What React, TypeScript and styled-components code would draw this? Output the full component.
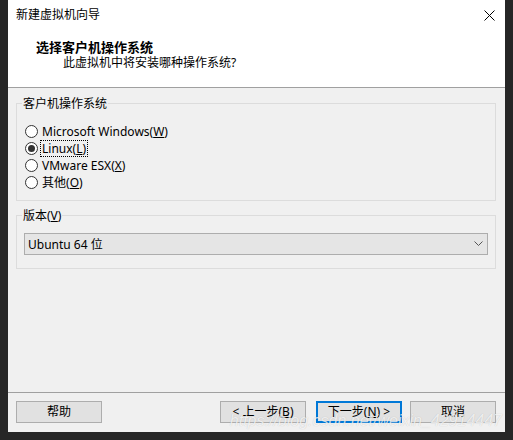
import styled, { createGlobalStyle } from 'styled-components';

const GlobalStyle = createGlobalStyle`
  html, body {
    margin: 0;
    padding: 0;
    background: #262626;
  }
  body {
    font-family: "Noto Sans", "Noto Sans CJK SC", sans-serif;
    font-size: 12px;
    color: #000;
  }
`;

const Window = styled.div`
  position: relative;
  margin-left: 8px;
  width: 497px;
  height: 432px;
  background: #f0f0f0;
  display: flex;
  flex-direction: column;
  overflow: hidden;
`;

const TitleBar = styled.div`
  height: 30px;
  background: #fff;
  display: flex;
  align-items: center;
  justify-content: space-between;
  padding: 0 10px 0 8px;
  line-height: 16px;
`;

const CloseButton = styled.svg`
  width: 11px;
  height: 11px;
  display: block;
`;

const Header = styled.div`
  box-sizing: border-box;
  height: 58px;
  background: #fff;
  border-bottom: 1px solid #a0a0a0;
  padding-top: 9px;
`;

const Heading = styled.div`
  font-weight: bold;
  font-size: 13px;
  line-height: 16px;
  padding-left: 28px;
`;

const Subheading = styled.div`
  line-height: 15px;
  padding-left: 55px;
`;

const Content = styled.div`
  padding: 8px 9px 0 8px;
  display: flex;
  flex-direction: column;
  gap: 7px;
`;

const Group = styled.fieldset<{ $padTop: number; $padBottom: number }>`
  margin: 0;
  min-width: 0;
  border: 1px solid #dcdcdc;
  padding: ${(p) => p.$padTop}px 7px ${(p) => p.$padBottom}px 7px;
`;

const Legend = styled.legend`
  line-height: 15px;
  padding: 0 1px;
  margin-left: -2px;
`;

const RadioRow = styled.label`
  display: flex;
  align-items: center;
  height: 17px;
  padding-left: 1px;
`;

const RadioCircle = styled.span<{ $checked?: boolean }>`
  box-sizing: border-box;
  width: 13px;
  height: 13px;
  border-radius: 50%;
  border: 1px solid #333;
  background: #fff;
  display: flex;
  align-items: center;
  justify-content: center;
  margin-right: 2px;

  &::after {
    content: '';
    width: 7px;
    height: 7px;
    border-radius: 50%;
    background: ${(p) => (p.$checked ? '#333' : 'transparent')};
  }
`;

const RadioText = styled.span<{ $focused?: boolean }>`
  line-height: 15px;
  padding: 0 1px;
  border: 1px dotted ${(p) => (p.$focused ? '#000' : 'transparent')};
`;

const Key = styled.span`
  text-decoration: underline;
`;

const Select = styled.div`
  box-sizing: border-box;
  height: 22px;
  background: #e5e5e5;
  border: 1px solid #adadad;
  display: flex;
  align-items: center;
  justify-content: space-between;
  padding: 0 4px 0 3px;
`;

const Chevron = styled.svg`
  width: 9px;
  height: 6px;
  display: block;
`;

const Footer = styled.div`
  margin-top: auto;
  border-top: 1px solid #a0a0a0;
  padding: 8px 9px 9px 8px;
  display: flex;
  align-items: center;
`;

const NavGroup = styled.div`
  margin-left: auto;
  display: flex;
  gap: 10px;
`;

const Button = styled.button<{ $primary?: boolean }>`
  box-sizing: border-box;
  width: 86px;
  height: 22px;
  margin: 0;
  padding: 0;
  font: inherit;
  line-height: 16px;
  color: #000;
  background: #e1e1e1;
  border: ${(p) => (p.$primary ? '2px solid #0078d7' : '1px solid #adadad')};
`;

const CancelButton = styled(Button)`
  margin-left: 8px;
`;

const Watermark = styled.div`
  position: absolute;
  right: 3px;
  bottom: 2px;
  font-family: "Liberation Sans", Arial, sans-serif;
  font-size: 16px;
  font-style: italic;
  color: rgba(255, 255, 255, 0.75);
  text-shadow: 0 0 1px rgba(0, 0, 0, 0.2);
  pointer-events: none;
  white-space: nowrap;
`;

const osOptions = [
  { label: 'Microsoft Windows', key: 'W' },
  { label: 'Linux', key: 'L', checked: true },
  { label: 'VMware ESX', key: 'X' },
  { label: '其他', key: 'O' },
];

const App = () => {
  return (
    <>
      <GlobalStyle />
      <Window>
        <TitleBar>
          <span>新建虚拟机向导</span>
          <CloseButton viewBox="0 0 11 11">
            <path d="M0.5 0.5 L10.5 10.5 M10.5 0.5 L0.5 10.5" stroke="#000" strokeWidth="1" />
          </CloseButton>
        </TitleBar>
        <Header>
          <Heading>选择客户机操作系统</Heading>
          <Subheading>此虚拟机中将安装哪种操作系统?</Subheading>
        </Header>
        <Content>
          <Group $padTop={12} $padBottom={9}>
            <Legend>客户机操作系统</Legend>
            {osOptions.map((o) => (
              <RadioRow key={o.key}>
                <RadioCircle $checked={o.checked} />
                <RadioText $focused={o.checked}>
                  {o.label}(<Key>{o.key}</Key>)
                </RadioText>
              </RadioRow>
            ))}
          </Group>
          <Group $padTop={10} $padBottom={13}>
            <Legend>
              版本(<Key>V</Key>)
            </Legend>
            <Select>
              <span>Ubuntu 64 位</span>
              <Chevron viewBox="0 0 9 6">
                <path d="M0.5 0.5 L4.5 4.5 L8.5 0.5" fill="none" stroke="#555" strokeWidth="1" />
              </Chevron>
            </Select>
          </Group>
        </Content>
        <Footer>
          <Button>帮助</Button>
          <NavGroup>
            <Button>
              &lt; 上一步(<Key>B</Key>)
            </Button>
            <Button $primary>
              下一步(<Key>N</Key>) &gt;
            </Button>
          </NavGroup>
          <CancelButton>取消</CancelButton>
        </Footer>
        <Watermark>https://blog.csdn.net/weixin_42914447</Watermark>
      </Window>
    </>
  );
};

export default App;
